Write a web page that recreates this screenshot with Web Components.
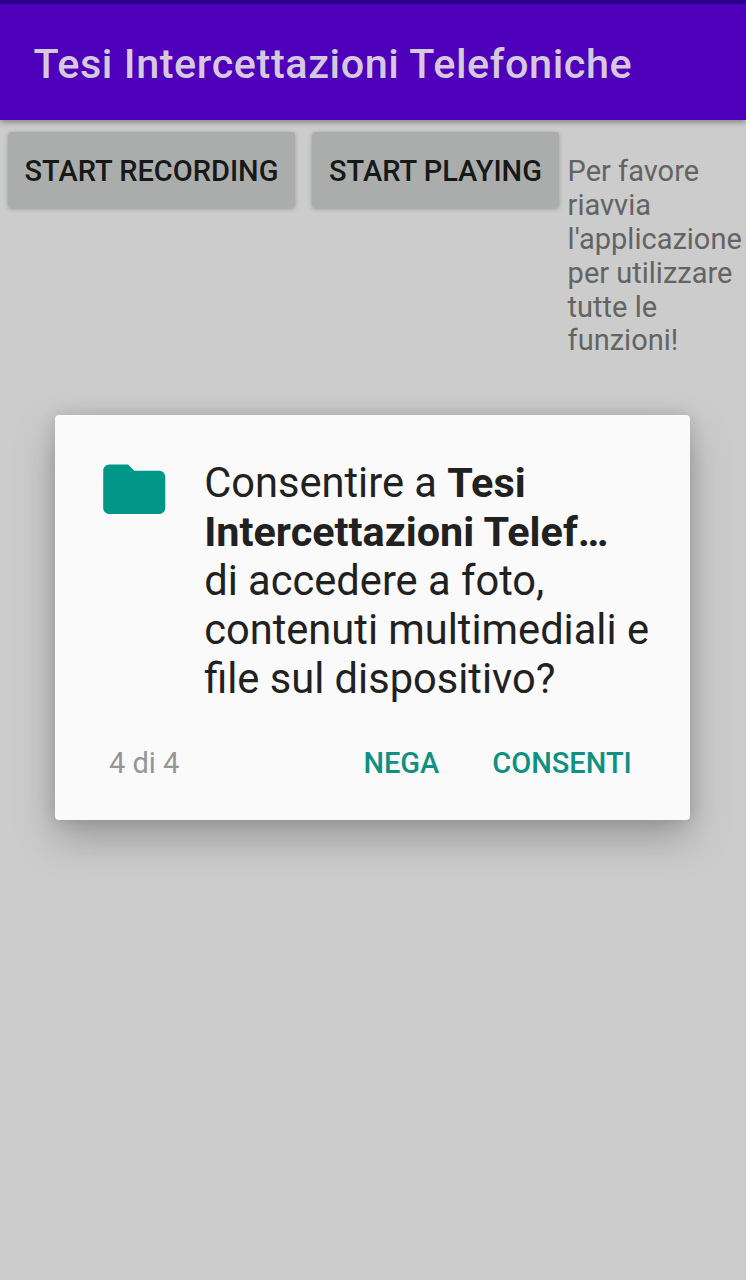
<!DOCTYPE html>
<html lang="it">
<head>
<meta charset="utf-8">
<title>Tesi Intercettazioni Telefoniche</title>
<style>
html,body{margin:0;height:100%;overflow:hidden}
body{font-family:Roboto,"Liberation Sans",sans-serif;background:#ccc}
</style>
</head>
<body>
<app-screen>
  <app-bar slot="bar">Tesi Intercettazioni Telefoniche</app-bar>
  <raised-button style="--w:287px">START RECORDING</raised-button>
  <raised-button style="--w:247px">START PLAYING</raised-button>
  <hint-text>Per favore<br>riavvia<br>l'applicazione<br>per utilizzare<br>tutte le<br>funzioni!</hint-text>
  <permission-dialog slot="dialog">
    <folder-icon slot="icon"></folder-icon>
    Consentire a <b>Tesi<br>Intercettazioni Telef…</b><br>di accedere a foto,<br>contenuti multimediali e<br>file sul dispositivo?
    <span slot="count">4 di 4</span>
    <flat-button slot="actions">NEGA</flat-button>
    <flat-button slot="actions">CONSENTI</flat-button>
  </permission-dialog>
</app-screen>
<script>
const define = (name, html) => customElements.define(name, class extends HTMLElement {
  constructor() {
    super();
    this.attachShadow({ mode: "open" }).innerHTML = html;
  }
});

define("app-screen", `<style>
:host{display:grid;grid-template-rows:120px 1fr;width:746px;height:1280px;background:#ccc;overflow:hidden;position:relative}
.row{display:flex;align-items:flex-start;padding:12px 0 0 8px}
.scrim{position:absolute;left:55px;top:415px}
::slotted(raised-button){margin-right:17px}
::slotted(hint-text){margin-left:-8.4px}
</style><slot name="bar"></slot><div class="row"><slot></slot></div><div class="scrim"><slot name="dialog"></slot></div>`);

define("app-bar", `<style>
:host{display:flex;align-items:center;box-sizing:border-box;height:120px;padding:4px 0 0 33.4px;background:#4e00ba;border-top:4px solid #2b008c;color:#d4c9dd;font-weight:500;font-size:41.4px;letter-spacing:.57px;white-space:nowrap;box-shadow:0 2px 6px rgba(0,0,0,.38);position:relative}
</style><span><slot></slot></span>`);

define("raised-button", `<style>
:host{display:flex;flex:none;align-items:center;justify-content:center;width:var(--w);height:76px;box-sizing:border-box;padding-top:2px;border-radius:4px;background:#abadac;color:#171918;font-weight:500;font-size:29px;white-space:nowrap;box-shadow:0 1px 4px rgba(0,0,0,.26)}
</style><span><slot></slot></span>`);

define("hint-text", `<style>
:host{display:block;flex:none;padding-top:22.9px;color:#636363;font-size:29px;line-height:33.9px;white-space:nowrap}
</style><slot></slot>`);

define("folder-icon", `<style>
:host{display:block}svg{display:block;width:74.5px;height:74.5px}
</style><svg viewBox="0 0 24 24"><path fill="#009688" d="M10 4H4c-1.1 0-1.99.9-1.99 2L2 18c0 1.1.9 2 2 2h16c1.1 0 2-.9 2-2V8c0-1.1-.9-2-2-2h-8l-2-2z"/></svg>`);

define("flat-button", `<style>
:host{display:block;color:#0f9080;font-weight:500;font-size:29px}
</style><slot></slot>`);

define("permission-dialog", `<style>
:host{display:flex;flex-direction:column;box-sizing:border-box;width:635px;height:405px;border-radius:4px;background:#fafafa;box-shadow:0 18px 40px rgba(0,0,0,.25),0 0 16px rgba(0,0,0,.13)}
.body{display:grid;grid-template-columns:107.5px 1fr;height:288px;padding:37.3px 0 0 41.7px}
.msg{padding-top:5.7px;font-size:41.62px;line-height:49px;color:#212121;white-space:nowrap}
::slotted(b){font-size:41.4px;line-height:0}
.body,.foot{box-sizing:border-box}
.foot{display:flex;align-items:center;height:40px;margin-top:40px;padding:0 58.2px 0 54px;font-size:29px;color:#959595}
.actions{display:flex;gap:53px;margin-left:auto}
</style><div class="body"><slot name="icon"></slot><div class="msg"><slot></slot></div></div>
<div class="foot"><slot name="count"></slot><div class="actions"><slot name="actions"></slot></div></div>`);
</script>
</body>
</html>
